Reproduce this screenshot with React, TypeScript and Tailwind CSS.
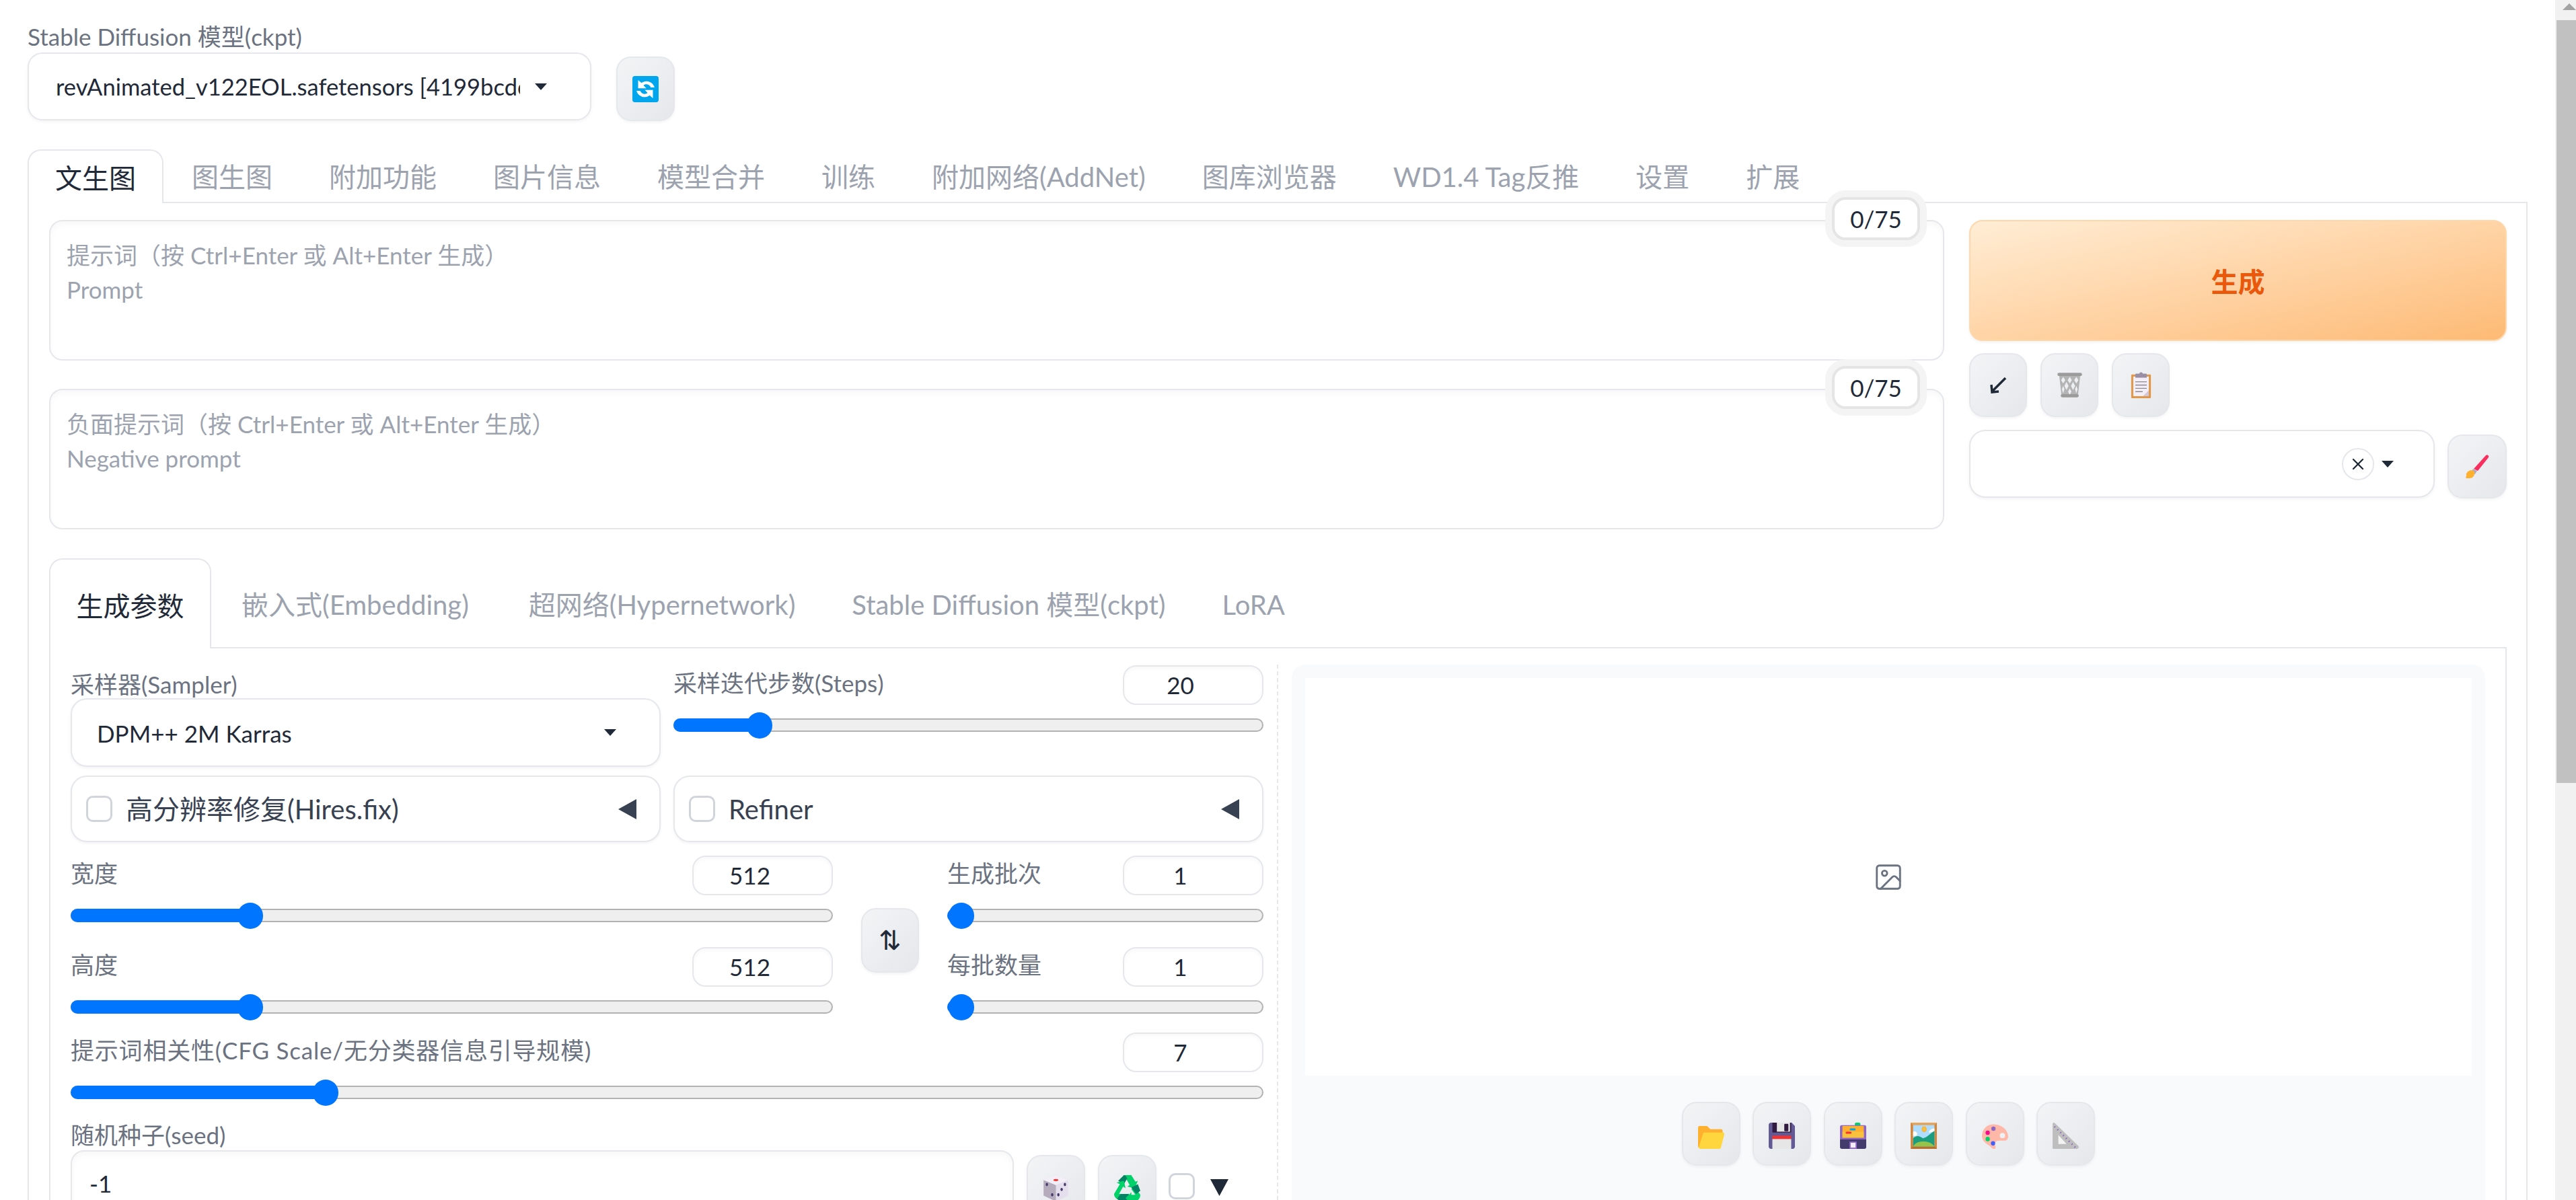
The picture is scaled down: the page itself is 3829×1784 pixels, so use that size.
import React from 'react';
import { Image as ImageIcon, X } from 'lucide-react';

const Caret = () => (
  <svg width="18" height="10" viewBox="0 0 18 10" className="shrink-0">
    <polygon points="0,0 18,0 9,10" fill="#1f2937" />
  </svg>
);

const LeftArrow = () => (
  <svg width="27" height="30" viewBox="0 0 27 30" className="shrink-0">
    <polygon points="27,0 27,30 0,15" fill="#374151" />
  </svg>
);

const Refresh = () => (
  <svg width="39" height="39" viewBox="0 0 32 32">
    <rect width="32" height="32" rx="3" fill="#00a6ed" />
    <path fill="#fff" d="M7 5v10h10l-3.5-3.5C16 9 21 10 22.5 14H27C25 7 17 4 11 8.5z" />
    <path fill="#fff" d="M25 27V17H15l3.5 3.5C16 23 11 22 9.5 18H5c2 7 10 10 16 5.5z" />
  </svg>
);

const Arrow = () => (
  <svg width="26" height="26" viewBox="0 0 26 26">
    <path d="M24 2 5 21M3 12l1 11 10-1" fill="none" stroke="#1f2937" strokeWidth="3.5" />
  </svg>
);

const Trash = () => (
  <svg width="39" height="39" viewBox="0 0 32 32">
    <path d="M3 3h26l-3 26H6z" fill="#b4b4b4" />
    <g fill="#eeeff2">
      <polygon points="8,6 10.5,10 8,14 5.5,10" />
      <polygon points="16,6 18.500,10 16,14 13.500,10" />
      <polygon points="24,6 26.500,10 24,14 21.500,10" />
      <polygon points="12,12 14.500,17 12,22 9.500,17" />
      <polygon points="20,12 22.500,17 20,22 17.500,17" />
      <polygon points="8,17 9.500,21 8,26 6.500,21" />
      <polygon points="16,20 18,24 16,28 14,24" />
      <polygon points="24,17 25.500,21 24,26 22.500,21" />
    </g>
    <rect x="1" y="1" width="30" height="4" rx="2" fill="#9b9b9b" />
    <rect x="5" y="27" width="22" height="4" rx="2" fill="#9b9b9b" />
  </svg>
);

const Clipboard = () => (
  <svg width="39" height="39" viewBox="0 0 32 32">
    <rect x="4" y="3" width="24" height="29" rx="1" fill="#e19747" />
    <path d="M6.500 5.500h19v17l-7 7h-12z" fill="#f3eef8" />
    <path d="M25.500 22.500v7h-7z" fill="#d3c7dc" />
    <path d="M10 2h4c0-2 4-2 4 0h4a1 1 0 0 1 1 1v4H9V3a1 1 0 0 1 1-1z" fill="#998ea4" />
    <path d="M9 12h14M9 16h14M9 20h14M9 24h9" stroke="#8b8b8b" strokeWidth="1.200" />
  </svg>
);

const Brush = () => (
  <svg width="38" height="36" viewBox="0 0 38 36">
    <path d="M32 1c2-2 5 0 4 3L20 24l-6-3z" fill="#f92f60" />
    <path d="M13 21l6 3-3 5-6-3z" fill="#b4acbc" />
    <path d="M7 24c3-2 7-1 8 2 1 4-2 9-7 9-3 0-6 0-6-1 1-2 1-3 1-5 0-2 2-4 4-5z" fill="#ffb02e" />
  </svg>
);

const Folder = () => (
  <svg width="39" height="39" viewBox="0 0 32 32">
    <path d="M0 6a2 2 0 0 1 2-2h8c1 0 2 .5 2.500 1.500L15 8h13a2 2 0 0 1 2 2v5H6L3 31H2a2 2 0 0 1-2-2z" fill="#ffb02e" />
    <path d="M6 13.500A2 2 0 0 1 8 12h22a2 2 0 0 1 2 2.500L28 30a2 2 0 0 1-2 2H3a2 2 0 0 1-2-2.500z" fill="#ffd63d" />
  </svg>
);

const Floppy = () => (
  <svg width="39" height="39" viewBox="0 0 32 32">
    <path d="M3 0h25l4 4v25a3 3 0 0 1-3 3H3a3 3 0 0 1-3-3V3a3 3 0 0 1 3-3z" fill="#635994" />
    <path d="M4.500 0h23v11a1 1 0 0 1-1 1h-21a1 1 0 0 1-1-1z" fill="#321b41" />
    <rect x="10" y="0" width="16" height="11" fill="#e6e6e6" />
    <rect x="19" y="1.500" width="5" height="9" rx="1" fill="#321b41" />
    <rect x="4.500" y="16" width="23" height="4" fill="#f8312f" />
    <rect x="4.500" y="20" width="23" height="12" fill="#e6e6e6" />
  </svg>
);

const CardBox = () => (
  <svg width="39" height="39" viewBox="0 0 32 32">
    <rect x="18" y="0" width="7" height="4" rx="2" fill="#00d26a" />
    <rect x="0" y="3" width="32" height="17" rx="2" fill="#8d65c5" />
    <rect x="3" y="4" width="26" height="15" fill="#ffb02e" />
    <rect x="3" y="11" width="26" height="8" fill="#f9c23c" />
    <rect x="12" y="7" width="7" height="2.500" rx="1" fill="#00a6ed" />
    <rect x="7" y="11" width="7" height="2.500" rx="1" fill="#f8312f" />
    <path d="M0 19h32v11a2 2 0 0 1-2 2H2a2 2 0 0 1-2-2z" fill="#433b6b" />
    <rect x="0" y="18.500" width="32" height="2" fill="#8d65c5" />
    <rect x="11.500" y="23" width="9" height="9" rx="1" fill="#8d65c5" />
    <rect x="13" y="24.500" width="6" height="6" fill="#f3eef8" />
  </svg>
);

const Framed = () => (
  <svg width="39" height="39" viewBox="0 0 32 32">
    <rect width="32" height="32" fill="#d3883e" />
    <path d="M0 0h32l-3 3H3z" fill="#e6a55a" />
    <path d="M0 32h32l-3-3H3z" fill="#b97028" />
    <rect x="3" y="3" width="26" height="26" fill="#aeddff" />
    <path d="M3 11c3-1 5 1 5 3s-3 3-5 2zM29 7c-3 0-6 2-7 5l7-1z" fill="#fff" />
    <ellipse cx="16.500" cy="8" rx="3" ry="3.500" fill="#ffb02e" />
    <ellipse cx="16.500" cy="8" rx="1.800" ry="2.500" fill="#f9c23c" />
    <path d="M3 19c4-4 8-3 12 0 5-1 8-5 14-9v19H3z" fill="#1c9e7e" />
    <path d="M3 29c3-5 8-6 13-6s10 2 13 6z" fill="#96c34a" />
  </svg>
);

const Palette = () => (
  <svg width="39" height="39" viewBox="0 0 32 32">
    <path d="M14 2C6 2 0 8 0 16c0 7 6 10 9 12 2 1 3 4 6 4 2 0 2-2 1-5-.6-2 1-5 5-5h6c3 0 5-2 5-5C32 9 24 2 14 2z" fill="#ffb8a8" />
    <ellipse cx="25" cy="15.700" rx="3.200" ry="3.200" fill="#eef0f3" />
    <ellipse cx="14" cy="7.400" rx="2.600" ry="2.700" fill="#8d65c5" />
    <ellipse cx="7" cy="12.300" rx="2.600" ry="2.700" fill="#f70a8d" />
    <ellipse cx="7" cy="20" rx="2.600" ry="2.700" fill="#00d26a" />
    <ellipse cx="13.500" cy="25.300" rx="2.600" ry="2.700" fill="#3f5fff" />
  </svg>
);

const Ruler = () => (
  <svg width="39" height="39" viewBox="0 0 32 32">
    <path d="M0 1.500C0 0 2-.5 3 .8l28.500 27.700c1 1.500 0 3.500-1.500 3.500H1a1 1 0 0 1-1-1z" fill="#bebebe" />
    <path d="M7 15v11h10z" fill="#f3f3f5" />
    <path d="M3.500 4.500l-1.500 1.500M7 8l-1.500 1.500M10.500 11.500l-1.500 1.500M14 15l-1.500 1.500M17.500 18.500l-1.500 1.500M21 22l-1.500 1.500M24.500 25.500l-1.500 1.500M28 29l-1.500 1.500" stroke="#8d65c5" strokeWidth="1.200" />
  </svg>
);

const Dice = () => (
  <svg width="39" height="39" viewBox="0 0 32 32">
    <path d="M16 0 31 6v19l-15 7L1 25V6z" fill="#e5deed" />
    <path d="M1 6l15 6v20L1 25z" fill="#b4acbc" />
    <path d="M16 0 31 6 16 12 1 6z" fill="#f3eef8" />
    <ellipse cx="16" cy="6" rx="3" ry="1.300" fill="#f8312f" />
    <g fill="#433b6b">
      <ellipse cx="5" cy="11.500" rx="1.400" ry="2" />
      <ellipse cx="11.500" cy="24" rx="1.400" ry="2" />
      <ellipse cx="27" cy="11.500" rx="1.400" ry="2" />
      <ellipse cx="23" cy="17.500" rx="1.400" ry="2" />
      <ellipse cx="19" cy="24" rx="1.400" ry="2" />
    </g>
  </svg>
);

const Recycle = () => (
  <svg width="39" height="39" viewBox="0 0 32 32">
    <path d="M12 0h9l5 8 3-1-4 9-9-2 3-2-4-7z" fill="#00d26a" />
    <path d="M12 0l-7 7 7 4 4-7c-1-2-2-4-4-4z" fill="#008463" />
    <path d="M7 11 0 23c0 4 3 6 5 7h5v-7H6l5-9 3 2-2-9-9 2z" fill="#00d26a" />
    <path d="M8 23h10v9H9c-3 0-5-3-5-4z" fill="#008463" />
    <path d="M25 14l7 10c0 4-3 8-7 8h-4v4l-7-8 7-7v3h5l-5-7z" fill="#00d26a" />
    <path d="M21 15l8-4 3 8-5 4z" fill="#008463" />
  </svg>
);

const IconButton = ({ children, className = '' }: { children: React.ReactNode; className?: string }) => (
  <div className={`flex items-center justify-center shrink-0 rounded-[22px] border-2 border-[#e5e7eb] bg-linear-to-br from-[#f3f4f6] to-[#e5e7eb] shadow-[0_2px_4px_rgba(0,0,0,0.05)] ${className}`}>
    {children}
  </div>
);

const NumberBox = ({ value }: { value: number }) => (
  <div className="flex items-center justify-center w-[209px] h-[59px] pr-[38px] shrink-0 rounded-[20px] border-2 border-[#e5e7eb] bg-white text-[35px] text-[#1f2937] shadow-[inset_0_3px_6px_rgba(0,0,0,0.03)]">
    {value}
  </div>
);

const Slider = ({ percent }: { percent: number }) => (
  <div className="relative h-[20px] rounded-full border-2 border-[#b2b2b2] bg-[#efefef]">
    <div className="absolute left-[-2px] top-[-2px] h-[20px] rounded-l-full bg-[#0075ff]" style={{ width: `${percent}%` }} />
    <div className="absolute top-[-11px] h-[39px] w-[38px] rounded-full bg-[#0075ff]" style={{ left: `calc(${percent}% - 19px)` }} />
  </div>
);

const SliderRow = ({ label, value, percent, className = '', labelClass = '' }: { label: string; value: number; percent: number; className?: string; labelClass?: string }) => (
  <div className={className}>
    <div className="flex items-center justify-between h-[59px]">
      <span className={`pb-[8px] text-[35px] text-[#6b7280] whitespace-nowrap leading-[40px] ${labelClass}`}>{label}</span>
      <NumberBox value={value} />
    </div>
    <div className="mt-[20px]">
      <Slider percent={percent} />
    </div>
  </div>
);

const Checkbox = ({ className = '' }: { className?: string }) => (
  <div className={`w-[39px] h-[39px] shrink-0 rounded-[10px] border-[3px] border-[#d1d5db] bg-white ${className}`} />
);

const FoldCard = ({ label, className = '' }: { label: string; className?: string }) => (
  <div className={`flex items-center h-[99px] pl-[21px] pr-[34px] rounded-[24px] border-2 border-[#e5e7eb] bg-white shadow-[0_2px_4px_rgba(0,0,0,0.05)] ${className}`}>
    <Checkbox />
    <span className="ml-[20px] text-[40px] text-[#374151]">{label}</span>
    <span className="ml-auto"><LeftArrow /></span>
  </div>
);

const Prompt = ({ lines }: { lines: string[] }) => (
  <div className="relative h-[209px] pl-[24px] pt-[25px] rounded-[20px] border-2 border-[#e5e7eb] bg-white shadow-[inset_0_5px_10px_rgba(0,0,0,0.03)]">
    {lines.map((t) => (
      <div key={t} className="text-[35px] leading-[51px] text-[#9ca3af]">{t}</div>
    ))}
    <div className="absolute right-[34px] top-[-36px] flex items-center justify-center w-[131px] h-[64px] rounded-[20px] border-4 border-[#e5e5e5] bg-white text-[35px] text-[#1f2937] shadow-[0_0_0_10px_#f4f4f4]">
      0/75
    </div>
  </div>
);

const topTabs = ['图生图', '附加功能', '图片信息', '模型合并', '训练', '附加网络(AddNet)', '图库浏览器', 'WD1.4 Tag反推', '设置', '扩展'];
const subTabs = ['嵌入式(Embedding)', '超网络(Hypernetwork)', 'Stable Diffusion 模型(ckpt)', 'LoRA'];

export default function App() {
  return (
    <div className="flex w-[3829px] h-[1784px] overflow-hidden bg-white font-['Lato','Noto_Sans_CJK_SC',sans-serif]">
      <div className="w-[3798px] shrink-0 px-[41px] pt-[36px]">
        <div className="h-[36px] leading-[36px] text-[35px] text-[#6b7280]">Stable Diffusion 模型(ckpt)</div>
        <div className="flex items-start gap-[37px] mt-[6px]">
          <div className="flex items-center w-[838px] h-[101px] pl-[40px] pr-[64px] rounded-[22px] border-2 border-[#e5e7eb] bg-white shadow-[0_2px_5px_rgba(0,0,0,0.05)]">
            <span className="w-[690px] overflow-hidden whitespace-nowrap text-[34.5px] text-[#1f2937]">revAnimated_v122EOL.safetensors [4199bcdc</span>
            <span className="ml-auto"><Caret /></span>
          </div>
          <IconButton className="mt-[6px] w-[87px] h-[96px]"><Refresh /></IconButton>
        </div>

        <div className="flex h-[80px] mt-[42px] border-b-2 border-[#e5e7eb]">
          <div className="flex items-center h-[80px] px-[39px] pt-[4px] rounded-t-[20px] border-2 border-b-0 border-[#e5e7eb] bg-white text-[40px] text-[#1f2937]">文生图</div>
          {topTabs.map((t) => (
            <div key={t} className="flex items-center px-[42px] pt-[4px] text-[40px] text-[#9ca3af] whitespace-nowrap">{t}</div>
          ))}
        </div>

        <div className="border-2 border-t-0 border-[#e5e7eb] pl-[30px] pr-[29px] pt-[25px]">
          <div className="flex gap-[37px]">
            <div className="flex flex-col gap-[42px] w-[2817px]">
              <Prompt lines={['提示词（按 Ctrl+Enter 或 Alt+Enter 生成）', 'Prompt']} />
              <Prompt lines={['负面提示词（按 Ctrl+Enter 或 Alt+Enter 生成）', 'Negative prompt']} />
            </div>
            <div className="w-[799px]">
              <div className="flex items-center justify-center h-[180px] pt-[4px] rounded-[20px] border-2 border-[#fed7aa] bg-linear-to-br from-[#ffedd5] to-[#fdba74] text-[40px] font-bold text-[#ea580c] shadow-[0_2px_4px_rgba(0,0,0,0.05)]">生成</div>
              <div className="flex gap-[20px] mt-[18px]">
                <IconButton className="w-[86px] h-[95px]"><Arrow /></IconButton>
                <IconButton className="w-[86px] h-[95px]"><Trash /></IconButton>
                <IconButton className="w-[86px] h-[95px]"><Clipboard /></IconButton>
              </div>
              <div className="flex items-start gap-[19px] mt-[19px]">
                <div className="flex items-center w-[692px] h-[101px] pl-[552px] rounded-[24px] border-2 border-[#e5e7eb] bg-white shadow-[0_2px_5px_rgba(0,0,0,0.05)]">
                  <div className="flex items-center justify-center w-[48px] h-[48px] rounded-full border-2 border-[#e5e7eb]">
                    <X size={28} strokeWidth={2} color="#1f2937" />
                  </div>
                  <span className="ml-[11px]"><Caret /></span>
                </div>
                <IconButton className="mt-[7px] w-[88px] h-[95px]"><Brush /></IconButton>
              </div>
            </div>
          </div>

          <div className="flex h-[134px] mt-[43px] border-b-2 border-[#e5e7eb]">
            <div className="flex items-center h-[134px] px-[38.500px] pt-[6px] rounded-t-[20px] border-2 border-b-0 border-[#e5e7eb] bg-white text-[40px] text-[#1f2937]">生成参数</div>
            <div className="flex ml-[3px]">
              {subTabs.map((t) => (
                <div key={t} className="flex items-center px-[42px] pt-[6px] first:mr-[5px] text-[40px] text-[#9ca3af] whitespace-nowrap">{t}</div>
              ))}
            </div>
          </div>

          <div className="flex border-x-2 border-[#e5e7eb] pl-[30px] pr-[30px] pt-[24px] h-[900px]">
            <div className="w-[1795px] shrink-0 pr-[20px] border-r-2 border-dashed border-[#e5e7eb]">
              <div className="flex gap-[19px]">
                <div className="w-[877px]">
                  <div className="pt-[9px] h-[50px] text-[35px] leading-[40px] text-[#6b7280]">采样器(Sampler)</div>
                  <div className="flex items-center h-[102px] pl-[37px] pr-[64px] rounded-[24px] border-2 border-[#e5e7eb] bg-white shadow-[0_2px_5px_rgba(0,0,0,0.05)]">
                    <span className="pt-[2px] text-[35px] text-[#1f2937]">DPM++ 2M Karras</span>
                    <span className="ml-auto"><Caret /></span>
                  </div>
                </div>
                <SliderRow label="采样迭代步数(Steps)" value={20} percent={14.400} className="w-[877px] pt-[1px]" />
              </div>

              <div className="flex gap-[19px] mt-[13px]">
                <FoldCard label="高分辨率修复(Hires.fix)" className="w-[877px]" />
                <FoldCard label="Refiner" className="w-[877px]" />
              </div>

              <div className="flex mt-[20px]">
                <div className="flex flex-col gap-[37px] w-[1133px]">
                  <SliderRow label="宽度" value={512} percent={23.500} />
                  <SliderRow label="高度" value={512} percent={23.500} />
                </div>
                <IconButton className="mt-[78px] ml-[42px] w-[86px] h-[96px]">
                  <span className="text-[40px] leading-none text-[#1f2937] font-['DejaVu_Sans',sans-serif]">⇅</span>
                </IconButton>
                <div className="flex flex-col gap-[37px] w-[470px] ml-[42px]">
                  <SliderRow label="生成批次" value={1} percent={4.050} />
                  <SliderRow label="每批数量" value={1} percent={4.050} />
                </div>
              </div>

              <SliderRow label="提示词相关性(CFG Scale/无分类器信息引导规模)" value={7} percent={21.300} className="mt-[28px]" labelClass="tracking-[0.8px]" />

              <div className="mt-[37px] h-[39px] text-[35px] leading-[33px] text-[#6b7280]">随机种子(seed)</div>
              <div className="flex items-start">
                <div className="flex items-center w-[1402px] h-[110px] pl-[26px] pb-[12px] rounded-[20px] border-2 border-[#e5e7eb] bg-white text-[35px] text-[#1f2937] shadow-[inset_0_5px_10px_rgba(0,0,0,0.03)]">-1</div>
                <IconButton className="mt-[7px] ml-[19px] w-[87px] h-[95px] pt-[4px]"><Dice /></IconButton>
                <IconButton className="mt-[7px] ml-[19px] w-[87px] h-[95px] pt-[4px]"><Recycle /></IconButton>
                <Checkbox className="mt-[34px] ml-[18px]" />
                <svg width="27" height="25" viewBox="0 0 27 25" className="mt-[43px] ml-[23px]">
                  <polygon points="0,0 27,0 13.500,25" fill="#1f2937" />
                </svg>
              </div>
            </div>

            <div className="ml-[20px] flex-1 h-[900px] p-[20px] rounded-[20px] bg-[#f9fafb]">
              <div className="flex items-center justify-center h-[591px] bg-white">
                <ImageIcon size={46} strokeWidth={1.500} color="#6b7280" />
              </div>
              <div className="flex justify-center gap-[18.500px] mt-[39px]">
                {[<Folder key="a" />, <Floppy key="b" />, <CardBox key="c" />, <Framed key="d" />, <Palette key="e" />, <Ruler key="f" />].map((icon, i) => (
                  <IconButton key={i} className="w-[87px] h-[95px] pt-[5px]">{icon}</IconButton>
                ))}
              </div>
            </div>
          </div>
        </div>
      </div>

      <div className="w-[31px] shrink-0 bg-[#f1f1f1]">
        <div className="h-[30px] pt-[5px] pl-[11px]">
          <svg width="20" height="10" viewBox="0 0 20 10"><polygon points="10,0 20,10 0,10" fill="#a3a3a3" /></svg>
        </div>
        <div className="ml-[2px] h-[1134px] bg-[#c1c1c1]" />
      </div>
    </div>
  );
}
